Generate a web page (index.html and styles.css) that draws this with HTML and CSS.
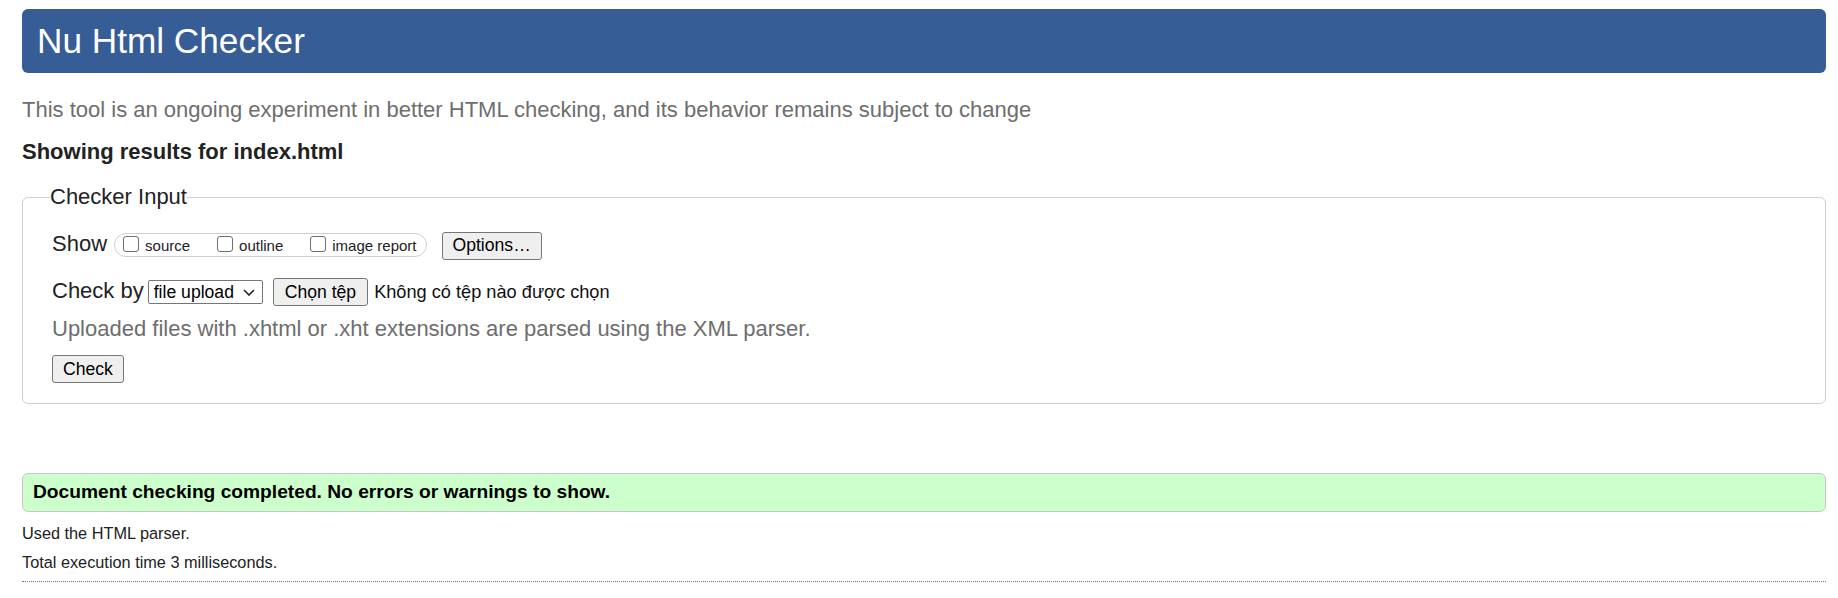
FILE: index.html
```html
<!DOCTYPE html>
<html lang="vi">
<head>
<meta charset="utf-8">
<title>Nu Html Checker</title>
<link rel="stylesheet" href="styles.css">
</head>
<body>
<h1 class="title">Nu Html Checker</h1>
<p class="intro">This tool is an ongoing experiment in better HTML checking, and its behavior remains subject to change</p>
<p class="showing">Showing results for index.html</p>
<form class="checker">
  <fieldset class="input-set">
    <legend class="legend">Checker Input</legend>
    <div class="row row-show">
      <span class="label">Show</span>
      <span class="pill">
        <label class="opt"><input type="checkbox" class="cb">source</label>
        <label class="opt"><input type="checkbox" class="cb">outline</label>
        <label class="opt"><input type="checkbox" class="cb">image report</label>
      </span>
      <button type="button" class="btn btn-options">Options…</button>
    </div>
    <div class="row row-by">
      <span class="label">Check by</span>
      <span class="select-wrap">
        <select class="select"><option>file upload</option></select>
        <svg class="chev" width="12" height="7" viewBox="0 0 12 7"><polyline points="1,1 6,6 11,1" fill="none" stroke="#222" stroke-width="1.6"/></svg>
      </span>
      <button type="button" class="btn btn-file">Chọn tệp</button>
      <span class="file-status">Không có tệp nào được chọn</span>
    </div>
    <p class="hint">Uploaded files with .xhtml or .xht extensions are parsed using the XML parser.</p>
    <div class="row row-submit">
      <button type="button" class="btn">Check</button>
    </div>
  </fieldset>
</form>
<div class="success">Document checking completed. No errors or warnings to show.</div>
<p class="meta meta-first">Used the HTML parser.</p>
<p class="meta">Total execution time 3 milliseconds.</p>
<hr class="rule">
</body>
</html>
```

FILE: styles.css
```css
html {
  background: #fff;
}

body {
  margin: 0;
  padding: 0 12px 0 22px;
  font-family: "Liberation Sans", Arial, Helvetica, sans-serif;
  color: #222;
}

.title {
  margin: 9px 0 0;
  height: 64px;
  padding: 0 15px;
  box-sizing: border-box;
  background: #365d95;
  color: #fff;
  border-radius: 6px;
  font-size: 35.2px;
  font-weight: normal;
  line-height: 64px;
}

.intro {
  margin: 24px 0 0;
  font-size: 22px;
  line-height: 26px;
  color: #6e6e6e;
}

.showing {
  margin: 16px 0 0;
  font-size: 22px;
  line-height: 26px;
  font-weight: bold;
  color: #222;
}

.checker {
  margin: 0;
}

.input-set {
  margin: 19px 0 0;
  padding: 0 28px 20px 29px;
  border: 1px solid #cfcfcf;
  border-radius: 6px;
  min-width: 0;
}

.legend {
  padding: 0;
  margin-left: -2px;
  font-size: 22px;
  line-height: 26px;
  color: #222;
}

.row {
  display: flex;
  align-items: baseline;
}

.row-show {
  margin-top: 21px;
}

.row-by {
  margin-top: 18px;
}

.row-submit {
  margin-top: 13px;
}

.label {
  font-size: 22px;
  line-height: 26px;
}

.pill {
  display: inline-flex;
  align-items: baseline;
  gap: 27px;
  height: 24px;
  box-sizing: border-box;
  margin-left: 7px;
  padding: 1px 9px 0 8px;
  border: 1px solid #cfcfcf;
  border-radius: 12px;
}

.opt {
  font-size: 15px;
  line-height: 21px;
  white-space: nowrap;
}

.cb {
  appearance: none;
  -webkit-appearance: none;
  display: inline-block;
  vertical-align: baseline;
  width: 16px;
  height: 16px;
  margin: 0 6px -1px 0;
  box-sizing: border-box;
  border: 1px solid #6f6f6f;
  border-radius: 3px;
  background: #fff;
}

.btn {
  height: 28px;
  padding: 0 10px;
  box-sizing: border-box;
  font-family: "Liberation Sans", Arial, Helvetica, sans-serif;
  font-size: 17.6px;
  color: #000;
  background: #efefef;
  border: 1px solid #767676;
  border-radius: 3px;
}

.btn-options {
  margin-left: 15px;
}

.select-wrap {
  position: relative;
  display: inline-block;
  margin-left: 4px;
}

.select {
  appearance: none;
  -webkit-appearance: none;
  width: 115px;
  height: 24px;
  box-sizing: border-box;
  margin: 0;
  padding: 0 0 0 5px;
  font-family: "Liberation Sans", Arial, Helvetica, sans-serif;
  font-size: 17.6px;
  color: #000;
  background: #fff;
  border: 1px solid #767676;
  border-radius: 2px;
}

.chev {
  position: absolute;
  right: 8px;
  top: 9px;
  pointer-events: none;
}

.btn-file {
  margin-left: 10px;
  padding: 0 11px;
}

.file-status {
  margin-left: 6px;
  font-size: 18.2px;
  color: #111;
}

.hint {
  margin: 10px 0 0;
  font-size: 22px;
  line-height: 26px;
  color: #6e6e6e;
}

.success {
  margin-top: 69px;
  padding: 6px 10px 7px;
  border: 1px solid #c8c8c8;
  border-radius: 6px;
  background: #ccffcc;
  color: #000;
  font-size: 19.2px;
  line-height: 24px;
  font-weight: bold;
}

.meta {
  margin: 9.4px 0 0;
  font-size: 16.3px;
  line-height: 20px;
  color: #222;
}

.meta-first {
  margin-top: 10.8px;
}

.rule {
  margin: 9.3px 0 0;
  height: 0;
  border: 0;
  border-top: 1px dotted #777;
}
```
